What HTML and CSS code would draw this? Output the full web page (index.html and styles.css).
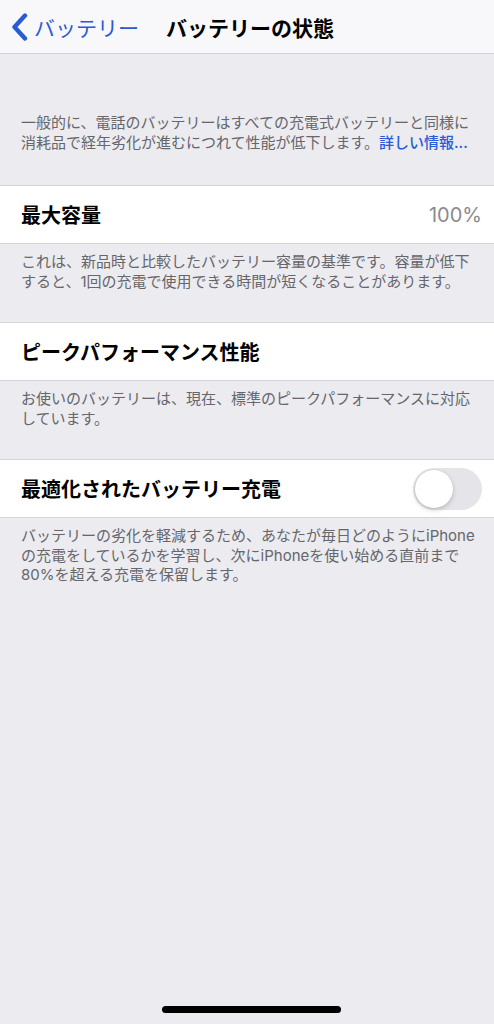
FILE: index.html
```html
<!DOCTYPE html>
<html lang="ja">
<head>
<meta charset="utf-8">
<link rel="stylesheet" href="styles.css">
</head>
<body>
<div class="screen">
  <header class="nav">
    <div class="back">
      <svg class="chev" width="20" height="28" viewBox="0 0 20 28"><path d="M15 2.5 L4.5 14 L15 25.5" fill="none" stroke="#2a5bd7" stroke-width="4.4" stroke-linecap="round" stroke-linejoin="round"/></svg>
      <span class="back-label">バッテリー</span>
    </div>
    <div class="title">バッテリーの状態</div>
  </header>

  <p class="intro">一般的に、電話のバッテリーはすべての充電式バッテリーと同様に<br>消耗品で経年劣化が進むにつれて性能が低下します。<span class="link">詳しい情報...</span></p>

  <div class="row"><span class="label">最大容量</span><span class="value">100%</span></div>
  <p class="foot">これは、新品時と比較したバッテリー容量の基準です。容量が低下<br>すると、1回の充電で使用できる時間が短くなることがあります。</p>

  <div class="row"><span class="label">ピークパフォーマンス性能</span></div>
  <p class="foot">お使いのバッテリーは、現在、標準のピークパフォーマンスに対応<br>しています。</p>

  <div class="row"><span class="label">最適化されたバッテリー充電</span><span class="toggle"><span class="knob"></span></span></div>
  <p class="foot">バッテリーの劣化を軽減するため、あなたが毎日どのようにiPhone<br>の充電をしているかを学習し、次にiPhoneを使い始める直前まで<br>80%を超える充電を保留します。</p>

  <div class="home"></div>
</div>
</body>
</html>
```

FILE: styles.css
```css
html, body {
  margin: 0;
  padding: 0;
  background: #ebebf0;
}
body {
  font-family: "Noto Sans CJK JP", "Noto Sans", sans-serif;
  color: #000;
}
.screen {
  width: 494px;
  height: 1024px;
  position: relative;
  display: flex;
  flex-direction: column;
  background: #ebebf0;
  overflow: hidden;
}
.nav {
  height: 53px;
  background: #f8f8fa;
  border-bottom: 1px solid #d4d4d8;
  display: flex;
  align-items: center;
  flex-shrink: 0;
}
.back {
  display: flex;
  align-items: center;
  padding-left: 10px;
  width: 156px;
  box-sizing: border-box;
}
.chev {
  display: block;
  margin-right: 4px;
}
.back-label {
  color: #2a5bd7;
  font-size: 21px;
  line-height: 28px;
}
.title {
  font-size: 21px;
  font-weight: 700;
  line-height: 28px;
  padding-left: 10px;
}
.intro {
  margin: 0;
  padding: 59px 21px 32px;
  font-family: Inter, "Noto Sans CJK JP", sans-serif;
  font-size: 15px;
  line-height: 20px;
  color: #66666b;
  white-space: nowrap;
}
.link {
  color: #2a5bd7;
  font-weight: 500;
}
.row {
  height: 57px;
  background: #fff;
  border-top: 1px solid #d4d4d8;
  border-bottom: 1px solid #d4d4d8;
  display: flex;
  align-items: center;
  justify-content: space-between;
  padding: 0 12px 0 21px;
  flex-shrink: 0;
}
.label {
  font-size: 20px;
  font-weight: 600;
  line-height: 28px;
}
.value {
  font-family: Inter, "Noto Sans", sans-serif;
  font-size: 20px;
  color: #8a8a8f;
  line-height: 28px;
}
.toggle {
  width: 69px;
  height: 42px;
  border-radius: 21px;
  background: #e4e4e9;
  position: relative;
  flex-shrink: 0;
}
.knob {
  position: absolute;
  left: 2px;
  top: 2px;
  width: 38px;
  height: 38px;
  border-radius: 50%;
  background: #fff;
  box-shadow: 0 2px 5px rgba(0,0,0,0.18), 0 0 0 0.5px rgba(0,0,0,0.06);
}
.foot {
  margin: 0;
  padding: 8px 21px 31px;
  font-family: Inter, "Noto Sans CJK JP", sans-serif;
  font-size: 15px;
  line-height: 19.5px;
  color: #66666b;
  white-space: nowrap;
}
.home {
  position: absolute;
  left: 162px;
  bottom: 11px;
  width: 179px;
  height: 7px;
  border-radius: 4px;
  background: #000;
}
```
